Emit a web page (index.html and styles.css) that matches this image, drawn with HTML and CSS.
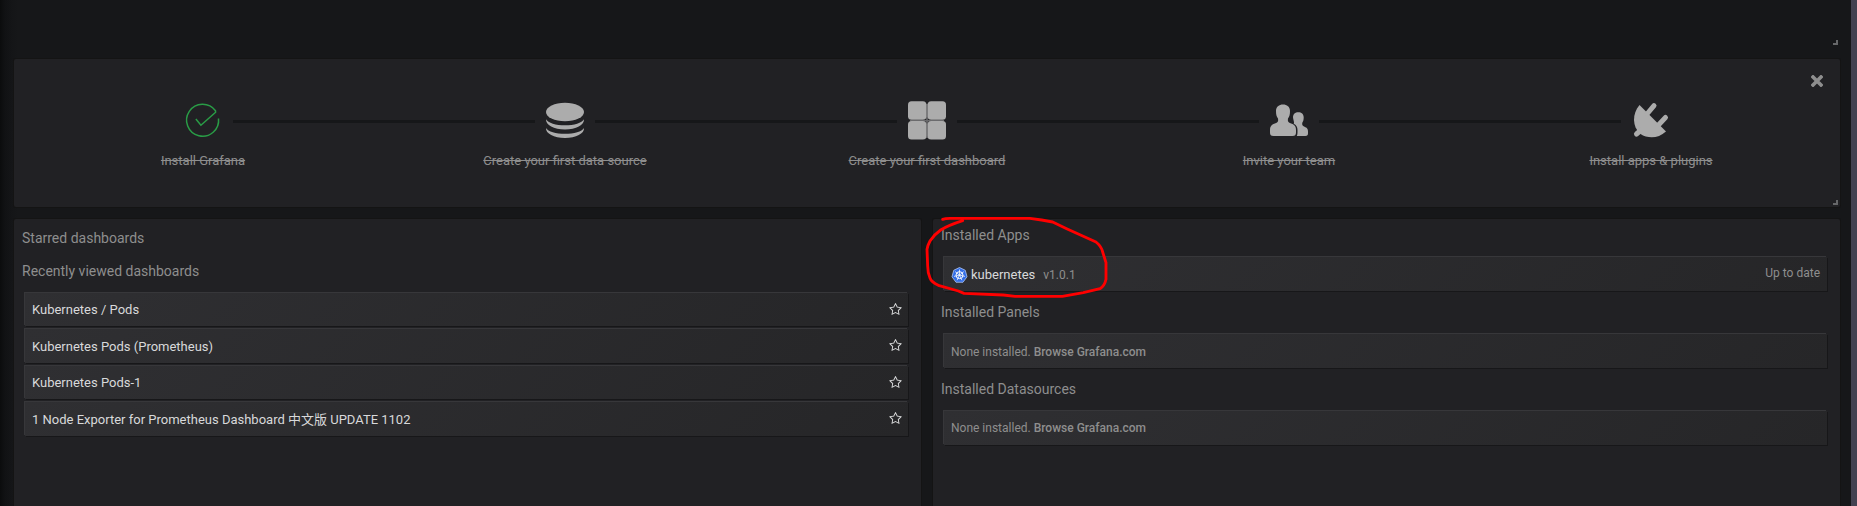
FILE: index.html
```html
<!DOCTYPE html>
<html lang="en">
<head>
<meta charset="utf-8">
<title>Grafana - Home</title>
<link rel="stylesheet" href="styles.css">
</head>
<body>
<svg class="defs" width="0" height="0">
  <symbol id="star" viewBox="0 0 1664 1600"><path d="M1137 1004l306-297-422-62-189-382-189 382-422 62 306 297-73 421 378-199 377 199zm527-357q0 22-26 48l-363 354 86 500q1 7 1 20 0 50-41 50-19 0-40-12l-449-236-449 236q-22 12-40 12-21 0-31.500-14.500t-10.500-35.500q0-6 2-20l86-500-364-354q-25-27-25-48 0-37 56-46l502-73 225-455q19-41 49-41t49 41l225 455 502 73q56 9 56 46z" transform="translate(0,-32)"/></symbol>
</svg>
<div class="page">
  <main class="dashboard">
    <div class="top-panel"><i class="resize"></i></div>
    <section class="panel getting-started">
      <svg class="close" viewBox="0 0 12 12"><path d="M2 2L10 10M10 2L2 10"/></svg>
      <div class="step">
        <div class="marker"><span class="line none"></span>
          <svg class="icon check" viewBox="-2.700 0 40 40"><path d="M32.800 17.500A16 16 0 1 1 29.800 9.800L29.900 11.200L15.200 24.200L10.200 18"/></svg>
          <span class="line"></span></div>
        <div class="label">Install Grafana</div>
      </div>
      <div class="step">
        <div class="marker"><span class="line"></span>
          <svg class="icon" viewBox="0 0 40 40"><ellipse cx="20" cy="11" rx="19" ry="9.300"/><path d="M1 18.200C3 22 11 24.300 20 24.300S37 22 39 18.200C39.500 24 31 28.400 20 28.400S.5 24 1 18.200zM1 27C3 30.600 11 32.800 20 32.800S37 30.600 39 27C39.500 32.500 31 37 20 37S.5 32.500 1 27z"/></svg>
          <span class="line"></span></div>
        <div class="label">Create your first data source</div>
      </div>
      <div class="step">
        <div class="marker"><span class="line"></span>
          <svg class="icon" viewBox="0 0 40 40"><path class="seam" d="M3 19h34v1.600H3zM19.200 3h1.600v34h-1.600z"/><rect x="1" y=".2" width="18.400" height="18.600" rx="3.500"/><rect x="20.600" y=".2" width="18.400" height="18.600" rx="3.500"/><rect x="1" y="20" width="18.400" height="18.600" rx="3.500"/><rect x="20.600" y="20" width="18.400" height="18.600" rx="3.500"/></svg>
          <span class="line"></span></div>
        <div class="label">Create your first dashboard</div>
      </div>
      <div class="step">
        <div class="marker"><span class="line"></span>
          <svg class="icon" viewBox="0 0 40 40"><path d="M14 3.500C18 3.500 21 5.800 21 10C21 14 20.400 15.500 19 17.500C18.500 20 19 21.300 21.500 22.300C25.500 23.800 27 25 27 29V31.500C27 34 26 35 23.500 35H4.500C2 35 1 34 1 31.500V29C1 25 2.500 23.800 6.500 22.300C9 21.300 9.500 20 9 17.500C7.600 15.500 7 14 7 10C7 5.800 10 3.500 14 3.500z"/><path d="M29.300 11.300C32.500 11.300 34.700 13.200 34.700 16.300C34.700 19 34.300 20.200 33.300 21.700C33 23.600 33.300 24.700 35 25.400C38 26.600 39 27.500 39 30.500V32.300C39 34.300 38.300 35 36.500 35H27.800Q28.500 33.500 28.500 31.500V29Q28.500 24.500 24.700 22.700C25.700 21.800 24.200 19 24 16.300C24 13.200 26.200 11.300 29.300 11.300z"/></svg>
          <span class="line"></span></div>
        <div class="label">Invite your team</div>
      </div>
      <div class="step">
        <div class="marker"><span class="line"></span>
          <svg class="icon" viewBox="0 0 40 40"><path d="M8.500 4L35 30.500C27 38 16.500 37.500 9.500 33C1 26 1 13 8.500 4z"/><path class="prong" d="M16 13L23 4.700M27 24.500L34.500 16.500M9.500 29.500L5.500 33"/></svg>
          <span class="line none"></span></div>
        <div class="label">Install apps &amp; plugins</div>
      </div>
      <i class="resize"></i>
    </section>
    <div class="columns">
      <section class="panel dashlist">
        <h5>Starred dashboards</h5>
        <h5>Recently viewed dashboards</h5>
        <div class="list">
          <a class="card">Kubernetes / Pods<svg class="star"><use href="#star"/></svg></a>
          <a class="card">Kubernetes Pods (Prometheus)<svg class="star"><use href="#star"/></svg></a>
          <a class="card">Kubernetes Pods-1<svg class="star"><use href="#star"/></svg></a>
          <a class="card">1 Node Exporter for Prometheus Dashboard 中文版 UPDATE 1102<svg class="star"><use href="#star"/></svg></a>
        </div>
      </section>
      <section class="panel plugins">
        <h5>Installed Apps</h5>
        <a class="card app">
          <svg class="k8s" viewBox="0 0 34 32"><path class="hept" d="M17 1L28.500 6.500L32 19.500L24 30.500H10L2 19.500L5.500 6.500z"/><circle cx="17" cy="16.300" r="7"/><path class="spokes" d="M17 16.300V5M17 16.300L25.800 9.300M17 16.300L28 18.800M17 16.300L21.900 26.500M17 16.300L12.100 26.500M17 16.300L6 18.800M17 16.300L8.200 9.300"/></svg>
          <span class="name">kubernetes</span><span class="version">v1.0.1</span><span class="status">Up to date</span>
        </a>
        <h5>Installed Panels</h5>
        <div class="card empty low"><span>None installed. <b>Browse Grafana.com</b></span></div>
        <h5>Installed Datasources</h5>
        <div class="card empty"><span>None installed. <b>Browse Grafana.com</b></span></div>
        <svg class="scribble" viewBox="225 50 550 250"><path d="M278 60Q285 57 300 57H540L575 62L608 68L650 88L738 128Q755 142 758 158L768 190V240Q764 260 750 268L700 280L637 291H495L460 287L342 282L325 275L265 258Q244 248 240 236Q233 220 233 200L231 150Q232 140 240 125Q252 106 272 92Q295 78 338 64"/></svg>
      </section>
    </div>
  </main>
  <div class="edge"></div>
</div>
</body>
</html>
```
FILE: styles.css
```css
* { box-sizing: border-box; }
body {
  margin: 0;
  background: #161719;
  color: #d8d9da;
  font: 13px/20px Roboto, "Noto Sans CJK SC", sans-serif;
  overflow: hidden;
}
.defs { position: absolute; }
.page { display: flex; height: 506px; }
.dashboard {
  flex: 1;
  display: flex;
  flex-direction: column;
  padding: 0 11px 0 14px;
  background: linear-gradient(90deg, #0b0c0d 0, #111214 5px, #141517 11px, #161719 17px);
}
.edge { width: 6px; background: #434251; }
.top-panel { height: 47px; margin-bottom: 12px; position: relative; }
.panel {
  position: relative;
  background: #212124;
  border-radius: 2px;
  box-shadow: 0 0 0 1px #141414;
}
.resize {
  position: absolute;
  right: 2px;
  bottom: 2px;
  width: 5px;
  height: 5px;
  border: solid #666769;
  border-width: 0 2px 2px 0;
}
.getting-started { display: flex; height: 148px; margin-bottom: 12px; padding: 42px 8px 0; }
.close { position: absolute; top: 16px; right: 17px; width: 12px; height: 12px; stroke: #8e8e8e; stroke-width: 3.6; stroke-linecap: square; }
.step { flex: 1; }
.marker { display: flex; align-items: center; height: 41px; }
.line { flex: 1; height: 3px; background: #161719; }
.line.none { visibility: hidden; }
.icon { width: 40px; height: 40px; margin: 0 10px 1px; fill: #acacac; }
.check { fill: none; stroke: #299c46; stroke-width: 1.5; }
.seam { fill: #6b6b6d; }
.prong { stroke: #acacac; stroke-width: 5; stroke-linecap: round; }
.label { margin-top: 9px; text-align: center; color: #8e8e8e; text-decoration: line-through; }
.columns { flex: 1; display: grid; grid-template-columns: 1fr 1fr; gap: 12px; }
.columns .panel { border-radius: 2px 2px 0 0; }
h5 { margin: 0; height: 33px; padding-left: 8px; font: 400 14px/33px Roboto, sans-serif; color: #8e8e8e; }
.dashlist { padding-top: 3px; }
.list { display: flex; flex-direction: column; gap: 3px; margin-top: 5px; }
.card {
  display: flex;
  align-items: center;
  height: 33.400px;
  margin: 0 13px 0 11px;
  padding: 0 7px;
  background: linear-gradient(135deg, #2f2f32, #262628);
  box-shadow: -1px -1px 0 rgba(255,255,255,.1), 1px 1px 0 rgba(0,0,0,.3);
}
.list .card { padding-top: 1.300px; }
.star { width: 13px; height: 12px; margin: 0 -.5px 3px auto; fill: #d8d9da; }
.plugins { padding-top: 1px; }
.plugins h5 { line-height: 31px; }
.plugins .card { height: 34px; margin-top: 4px; margin-bottom: 6px; }
.k8s { width: 17px; height: 16px; margin: 2px 3.500px 0 -.5px; fill: none; stroke: #fff; }
.hept { fill: #326de6; stroke: #b9cdf8; stroke-width: 1.5; }
.k8s circle { stroke-width: 2; }
.spokes { stroke-width: 1.5; }
.name { padding-top: 2px; }
.version { margin-left: 8px; padding-top: 2px; color: #8e8e8e; font-size: 12px; }
.status { margin: -3px 0 0 auto; color: #8e8e8e; font-size: 12px; }
.empty { color: #8e8e8e; font-size: 12px; }
.empty b { font-weight: 500; }
.plugins .low { padding-top: 2px; }
.scribble { position: absolute; left: -8px; top: -2.800px; width: 183.330px; height: 83.330px; fill: none; stroke: #f00; stroke-width: 8.500; stroke-linecap: round; stroke-linejoin: round; }
```
